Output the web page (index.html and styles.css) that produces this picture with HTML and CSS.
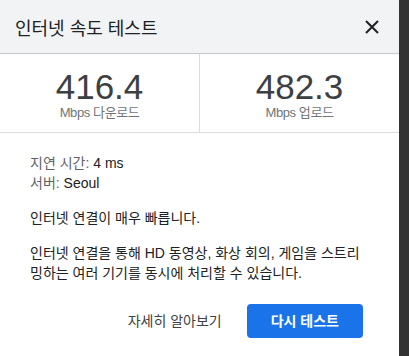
FILE: index.html
```html
<!DOCTYPE html>
<html lang="ko">
<head>
  <meta charset="UTF-8">
  <meta name="viewport" content="width=device-width,initial-scale=1.0">
  <title>인터넷 속도 테스트</title>
  <link rel="stylesheet" href="styles.css">
</head>
<body>
  <div class="dialog">
    <div class="header">
      <h1>인터넷 속도 테스트</h1>
      <button class="close" aria-label="닫기">
        <svg width="14" height="14" viewBox="0 0 14 14">
          <path d="M1 1L13 13M13 1L1 13" stroke="#202124" stroke-width="2" fill="none"/>
        </svg>
      </button>
    </div>
    <div class="stats">
      <div class="stat">
        <div class="value">416.4</div>
        <div class="label">Mbps 다운로드</div>
      </div>
      <div class="stat">
        <div class="value">482.3</div>
        <div class="label">Mbps 업로드</div>
      </div>
    </div>
    <div class="content">
      <div class="info">
        <div><span class="key">지연 시간:</span> 4 ms</div>
        <div><span class="key">서버:</span> Seoul</div>
      </div>
      <p>인터넷 연결이 매우 빠릅니다.</p>
      <p>인터넷 연결을 통해 HD 동영상, 화상 회의, 게임을 스트리밍하는 여러 기기를 동시에 처리할 수 있습니다.</p>
      <div class="actions">
        <a href="#" class="link">자세히 알아보기</a>
        <button class="primary">다시 테스트</button>
      </div>
    </div>
  </div>
  <div class="rail"></div>
</body>
</html>
```

FILE: styles.css
```css
body {
  margin: 0;
  display: flex;
  height: 356px;
  overflow: hidden;
  background: #fff;
  font-family: "Liberation Sans", "Noto Sans CJK KR", sans-serif;
  color: #202124;
}
.dialog {
  width: 399px;
  background: #fff;
}
.rail {
  width: 10px;
  background: #333;
}
.header {
  height: 53px;
  background: #f1f3f4;
  border-bottom: 1px solid #c8c8c8;
  display: flex;
  align-items: center;
  justify-content: space-between;
  padding: 0 20px 0 15px;
}
.header h1 {
  margin: 0;
  font-size: 18px;
  font-weight: 400;
  color: #202124;
}
.close {
  border: 0;
  background: none;
  padding: 0;
  width: 14px;
  height: 14px;
  display: flex;
  cursor: pointer;
}
.stats {
  display: flex;
  height: 78px;
  border-bottom: 1px solid #dadce0;
}
.stat {
  flex: 1;
  text-align: center;
  padding-top: 15px;
}
.stat + .stat {
  border-left: 1px solid #dadce0;
}
.value {
  font-size: 35px;
  line-height: 36px;
  color: #3c4043;
}
.label {
  font-size: 13px;
  line-height: 16px;
  color: #70757a;
  letter-spacing: -0.4px;
}
.content {
  padding: 20px 36px 0 30px;
  font-size: 14px;
  line-height: 20px;
}
.key {
  color: #5f6368;
}
.content p {
  margin: 15px 0 0;
}
.actions {
  display: flex;
  justify-content: flex-end;
  align-items: center;
  margin-top: 21px;
}
.link {
  color: #3c4043;
  text-decoration: none;
  margin-right: 25px;
}
.primary {
  height: 34px;
  padding: 0 24px;
  border: 0;
  border-radius: 4px;
  background: #1a73e8;
  color: #fff;
  font: inherit;
  font-weight: 700;
  cursor: pointer;
}
```
